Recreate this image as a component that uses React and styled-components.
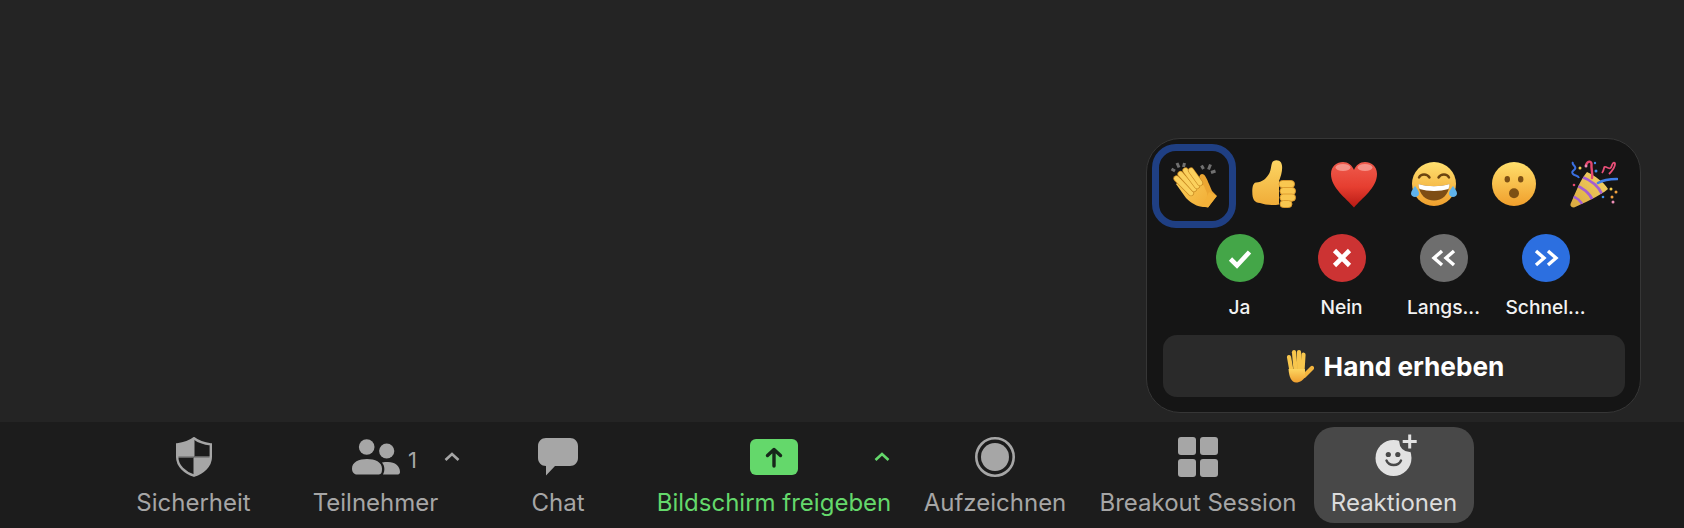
import React from "react";
import styled, { createGlobalStyle } from "styled-components";

const GlobalStyle = createGlobalStyle`
  html, body {
    margin: 0;
    padding: 0;
    background: #242424;
    font-family: Inter, "Noto Sans", "Liberation Sans", sans-serif;
  }
`;

const GREY = "#a6a6a6";
const GREEN = "#64d86b";

function ShieldIcon() {
  return (
    <svg width="36" height="40" viewBox="0 0 36 40">
      <path
        d="M18 1.300C22 4.500 28 6.600 34.800 7.400V20C34.800 29 27 35.600 18 38.700 9 35.600 1.200 29 1.200 20V7.400C8 6.600 14 4.500 18 1.300Z"
        fill="none"
        stroke={GREY}
        strokeWidth="2.400"
      />
      <path d="M18 1.300C14 4.500 8 6.600 1.200 7.400V19H18Z" fill={GREY} stroke={GREY} />
      <path d="M18 21H34.800C34 29 27 35.600 18 38.700Z" fill={GREY} stroke={GREY} />
      <path d="M1 20H35" stroke={GREY} strokeWidth="1" />
    </svg>
  );
}

function PeopleIcon() {
  return (
    <svg width="48" height="36" viewBox="0 0 48 36" fill={GREY}>
      <circle cx="14.700" cy="8" r="7.800" />
      <circle cx="34.700" cy="12" r="7.600" />
      <path d="M0 29.500C0 23 7 20 15 20S30 23 30 29.500 28 35.500 25 35.500H5C2 35.500 0 33 0 29.500Z" />
      <path d="M31 35.500C33 32 33 27 30 23.500 32 23 34 23 36 23 43 23 48 27 48 33 48 34.500 47 35.500 46 35.500Z" />
    </svg>
  );
}

function ChatIcon() {
  return (
    <svg width="40" height="38" viewBox="0 0 40 38" fill={GREY}>
      <path d="M8 0H32C36.500 0 40 3.500 40 8V20C40 24.500 36.500 28 32 28H17L8 37.500V28C3.500 28 0 24.500 0 20V8C0 3.500 3.500 0 8 0Z" />
    </svg>
  );
}

function ShareIcon() {
  return (
    <svg width="48" height="36" viewBox="0 0 48 36">
      <rect width="48" height="36" rx="6" fill={GREEN} />
      <path
        d="M24 27V10.500M17.500 16.500L24 10.500L30.500 16.500"
        fill="none"
        stroke="#17261a"
        strokeWidth="3.400"
        strokeLinecap="round"
        strokeLinejoin="round"
      />
    </svg>
  );
}

function RecordIcon() {
  return (
    <svg width="40" height="40" viewBox="0 0 40 40">
      <circle cx="20" cy="20" r="18.700" fill="none" stroke={GREY} strokeWidth="2.600" />
      <circle cx="20" cy="20" r="14" fill={GREY} />
    </svg>
  );
}

function BreakoutIcon() {
  return (
    <svg width="40" height="40" viewBox="0 0 40 40" fill={GREY}>
      <rect width="18" height="18" rx="3" />
      <rect x="22" width="18" height="18" rx="3" />
      <rect y="22" width="18" height="18" rx="3" />
      <rect x="22" y="22" width="18" height="18" rx="3" />
    </svg>
  );
}

function ReactionIcon() {
  return (
    <svg width="50" height="50" viewBox="-6 0 50 50">
      <circle cx="18.500" cy="26" r="18" fill="#e2e2e2" />
      <circle cx="34.700" cy="9.500" r="10.500" fill="#484848" />
      <path d="M34.700 2.500V16.500M27.700 9.500H41.700" stroke="#e2e2e2" strokeWidth="3" />
      <circle cx="13.300" cy="22.500" r="2.600" fill="#484848" />
      <circle cx="22.800" cy="22.500" r="2.600" fill="#484848" />
      <path d="M11.500 28.500C14 34.500 23.500 34.500 26 28.500" fill="none" stroke="#484848" strokeWidth="2.400" strokeLinecap="round" />
    </svg>
  );
}

function CaretIcon({ color }) {
  return (
    <svg width="16" height="10" viewBox="0 0 16 10">
      <path d="M1.500 8L8 2L14.500 8" fill="none" stroke={color} strokeWidth="2.600" />
    </svg>
  );
}

function ClapEmoji() {
  const finger = [
    [6.500, 18.500, 21, 33],
    [10.500, 14, 24, 29],
    [15.500, 10.500, 27, 26],
    [21, 10.500, 30, 23],
  ];
  return (
    <svg width="48" height="48" viewBox="0 0 48 48">
      <defs>
        <linearGradient id="clapSkin" x1="0" y1="0" x2="1" y2="1">
          <stop offset="0" stopColor="#fbd25f" />
          <stop offset="1" stopColor="#f2ad35" />
        </linearGradient>
      </defs>
      <g stroke="#707070" strokeWidth="3">
        <path d="M1.500 9L5 11M7 3L9 7.500M14.500 3L13.500 7M31.500 5.500L33.500 9M40.500 4.500L38.500 9.500M45.500 11L41 12.500" />
      </g>
      <path d="M32 14C35 14 37 19 39 24L42 31 47 36 38 47.500 30 42 26 28 29 19C29 17 30 14 32 14Z" fill="#eba632" />
      <path d="M6 24L22 11 34 26 37 33C38 38 37 43 35 47 28 47.500 21 43 16 38Z" fill="url(#clapSkin)" />
      <path d="M39 32L46.500 36 38 47.500 32 46.500Z" fill="#f3b139" />
      {finger.map(([x1, y1, x2, y2]) => (
        <g key={x1} strokeLinecap="round">
          <line x1={x1} y1={y1} x2={x2} y2={y2} stroke="#c98a22" strokeWidth="6.200" />
          <line x1={x1} y1={y1} x2={x2} y2={y2} stroke="#fbd15d" strokeWidth="4.800" />
        </g>
      ))}
    </svg>
  );
}

function ThumbEmoji() {
  return (
    <svg width="48" height="48" viewBox="2 0 48 48">
      <defs>
        <linearGradient id="thumbSkin" x1="0" y1="0" x2="0" y2="1">
          <stop offset="0" stopColor="#fcd563" />
          <stop offset="1" stopColor="#f0ac38" />
        </linearGradient>
      </defs>
      <path
        d="M8 22.500C14 22.500 19 18 21.500 13 23 10 23 6 24 3 25 -.5 31 -.8 33 2.500 35.500 7 33.500 15 31 21V44.500C24 46 17 44.500 12 43 6.500 43 4.300 39 4.300 32 4.300 27 5 23 8 22.500Z"
        fill="url(#thumbSkin)"
      />
      {[20.500, 27.500, 34, 40.500].map((y, i) => (
        <rect key={y} x={31 + (i === 0 ? 0 : 1)} y={y} width={i === 3 ? 12 : 15.500} height={i === 3 ? 7 : 7.200} rx="3.500" fill="#f9c750" stroke="#dd9a2c" strokeWidth=".9" />
      ))}
    </svg>
  );
}

function HeartEmoji() {
  return (
    <svg width="48" height="48" viewBox="0 0 48 48">
      <defs>
        <linearGradient id="heartFill" x1="0" y1="0" x2="0" y2="1">
          <stop offset="0" stopColor="#ee5b4d" />
          <stop offset=".55" stopColor="#e63e30" />
          <stop offset="1" stopColor="#b81a14" />
        </linearGradient>
      </defs>
      <path d="M24 47.500C16 38 1 28 1 14 1 6 7 2 13 2 18 2 22 5 24 10 26 5 30 2 35 2 41 2 47 6 47 14 47 28 32 38 24 47.500Z" fill="url(#heartFill)" />
      <ellipse cx="13" cy="7.500" rx="7.500" ry="3.500" fill="#f9a79d" opacity=".75" />
      <ellipse cx="35" cy="7.500" rx="7.500" ry="3.500" fill="#f9a79d" opacity=".75" />
    </svg>
  );
}

function LaughEmoji() {
  return (
    <svg width="48" height="48" viewBox="0 0 48 48">
      <defs>
        <linearGradient id="laughFace" x1="0" y1="0" x2="0" y2="1">
          <stop offset="0" stopColor="#ffe070" />
          <stop offset="1" stopColor="#ef9f2d" />
        </linearGradient>
      </defs>
      <circle cx="24" cy="24" r="22" fill="url(#laughFace)" />
      <path d="M9 17.500C11 13.500 17 13.500 19.500 17.500M28.500 17.500C31 13.500 37 13.500 39 17.500" fill="none" stroke="#6b4410" strokeWidth="2.400" strokeLinecap="round" />
      <path d="M8.500 24C18 27 30 27 39.500 24 39 35 32 40.500 24 40.500S9 35 8.500 24Z" fill="#7d4d14" />
      <path d="M8.500 24C18 27 30 27 39.500 24 39.500 26 39 27.500 38.500 29 30 31.500 18 31.500 9.500 29 9 27.500 8.500 26 8.500 24Z" fill="#fff" />
      <path d="M5 26C7 29 9 31 9 33.500 9 35.500 7 37 5 37S1 35.500 1 33.500C1 31 3 29 5 26Z" fill="#5fb3ec" />
      <path d="M43 26C45 29 47 31 47 33.500 47 35.500 45 37 43 37S39 35.500 39 33.500C39 31 41 29 43 26Z" fill="#5fb3ec" />
    </svg>
  );
}

function WowEmoji() {
  return (
    <svg width="48" height="48" viewBox="0 0 48 48">
      <defs>
        <linearGradient id="wowFace" x1="0" y1="0" x2="0" y2="1">
          <stop offset="0" stopColor="#ffdf6c" />
          <stop offset="1" stopColor="#f09f2c" />
        </linearGradient>
      </defs>
      <circle cx="24" cy="24" r="22" fill="url(#wowFace)" />
      <ellipse cx="17.300" cy="19.300" rx="2.700" ry="3.300" fill="#7d5014" />
      <ellipse cx="30.700" cy="19.300" rx="2.700" ry="3.300" fill="#7d5014" />
      <circle cx="24" cy="33.300" r="5" fill="#7d5014" />
    </svg>
  );
}

function PartyEmoji() {
  return (
    <svg width="48" height="48" viewBox="0 0 48 48" fill="none">
      <defs>
        <linearGradient id="coneFill" x1="0" y1="1" x2="1" y2="0">
          <stop offset="0" stopColor="#d9a93f" />
          <stop offset="1" stopColor="#f6d566" />
        </linearGradient>
        <clipPath id="coneClip">
          <path d="M.500 44C6 32 10 20 17 12 25 16 34 22 38 29 30 36 12 44 4 47.500 1.500 47.500 0 46 .500 44Z" />
        </clipPath>
      </defs>
      <path d="M.500 44C6 32 10 20 17 12 25 16 34 22 38 29 30 36 12 44 4 47.500 1.500 47.500 0 46 .500 44Z" fill="url(#coneFill)" />
      <g clipPath="url(#coneClip)" stroke="#a55fd1" strokeWidth="2.800">
        <path d="M1 36C6 37 11 41 13 46" />
        <path d="M5 25C12 27 20 33 23 41" />
        <path d="M10 16C18 19 28 25 32 34" />
      </g>
      <path d="M3 2C1 5 7 6 5 9 3 11 1 12 3 14 5 16 8 15 9 18" stroke="#3a6fe0" strokeWidth="2" />
      <path d="M16 5C18 0 22 1 21.500 5 21 9 23 13 22 18" stroke="#e4476f" strokeWidth="2.400" strokeLinecap="round" />
      <path d="M32 13C35 9 33 6 36 7 40 9 41 9 42 5 43 2 45 2 45 4 45 7 41 12 39 14" stroke="#e84f78" strokeWidth="1.800" />
      <path d="M28 23C33 20 38 19 47 19" stroke="#3f7ee8" strokeWidth="2.600" strokeLinecap="round" />
      <circle cx="10" cy="8" r="1.500" fill="#f6d04d" />
      <circle cx="16" cy="6" r="1.500" fill="#f08cb4" />
      <circle cx="26" cy="11" r="1.500" fill="#3f8ce8" />
      <circle cx="4" cy="25" r="1.300" fill="#e4476f" />
      <circle cx="25" cy="3" r="1.200" fill="#3f8ce8" />
      <circle cx="41" cy="29" r="1.500" fill="#f6d04d" />
      <circle cx="46" cy="32" r="1.500" fill="#f2a13c" />
      <circle cx="33" cy="37" r="1.300" fill="#3f8ce8" />
      <circle cx="42" cy="37" r="1.500" fill="#f2a13c" />
      <circle cx="43" cy="42" r="1.500" fill="#ef8fb8" />
    </svg>
  );
}

function HandEmoji() {
  return (
    <svg width="30" height="34" viewBox="0 0 30 34">
      <defs>
        <linearGradient id="handSkin" x1="0" y1="0" x2="0" y2="1">
          <stop offset="0" stopColor="#fcd560" />
          <stop offset="1" stopColor="#ef9f2f" />
        </linearGradient>
      </defs>
      <g stroke="#f7c64d" strokeWidth="4.200" strokeLinecap="round">
        <line x1="5" y1="8" x2="7.500" y2="22" />
        <line x1="10" y1="3" x2="11.500" y2="20" />
        <line x1="15" y1="3" x2="15.200" y2="20" />
        <line x1="19.500" y1="5.500" x2="18.500" y2="21" />
      </g>
      <path d="M28 19L20 27" stroke="#f3b53e" strokeWidth="4.200" strokeLinecap="round" />
      <path d="M4.500 20H21V27C20 31 16 33.500 12 33.500 7.500 33.500 5 28 4.500 20Z" fill="url(#handSkin)" />
    </svg>
  );
}

const tools = [
  { label: "Sicherheit", icon: <ShieldIcon />, width: 147 },
  { label: "Teilnehmer", icon: <PeopleIcon />, width: 217, count: "1", caretLeft: 177, caret: GREY },
  { label: "Chat", icon: <ChatIcon />, width: 148 },
  { label: "Bildschirm freigeben", icon: <ShareIcon />, width: 284, green: true, caretLeft: 242, caret: GREEN },
  { label: "Aufzeichnen", icon: <RecordIcon />, width: 158 },
  { label: "Breakout Session", icon: <BreakoutIcon />, width: 232, offset: 8 },
  { label: "Reaktionen", icon: <ReactionIcon />, width: 160, active: true },
];

const emojis = [ClapEmoji, ThumbEmoji, HeartEmoji, LaughEmoji, WowEmoji, PartyEmoji];

const feedback = [
  { label: "Ja", color: "#44a648", path: "M-9.500 1L-3 7.500 9.500-6", width: 4.600 },
  { label: "Nein", color: "#cc3333", path: "M-7.500-7.500L7.500 7.500M7.500-7.500L-7.500 7.500", width: 4.600 },
  { label: "Langs...", color: "#6e6e6e", path: "M-2-7L-10 0-2 7M10-7L2 0 10 7", width: 3.400 },
  { label: "Schnel...", color: "#2c6fe0", path: "M-10-7L-2 0-10 7M2-7L10 0 2 7", width: 3.400 },
];

export default function App() {
  return (
    <Page>
      <GlobalStyle />
      <Stage>
        <ReactionPanel>
          <EmojiRow>
            {emojis.map((Emoji, i) => (
              <EmojiCell key={i} $selected={i === 0}>
                <Emoji />
              </EmojiCell>
            ))}
          </EmojiRow>
          <FeedbackRow>
            {feedback.map((item) => (
              <FeedbackItem key={item.label}>
                <svg width="48" height="48" viewBox="-24 -24 48 48">
                  <circle r="24" fill={item.color} />
                  <path d={item.path} fill="none" stroke="#fff" strokeWidth={item.width} />
                </svg>
                <FeedbackLabel>{item.label}</FeedbackLabel>
              </FeedbackItem>
            ))}
          </FeedbackRow>
          <RaiseHand>
            <HandEmoji />
            Hand erheben
          </RaiseHand>
        </ReactionPanel>
      </Stage>
      <Toolbar>
        {tools.map((tool) => (
          <ToolButton key={tool.label} $width={tool.width} $offset={tool.offset} $active={tool.active}>
            <ToolIcon>{tool.icon}</ToolIcon>
            <ToolLabel $green={tool.green} $active={tool.active}>
              {tool.label}
            </ToolLabel>
            {tool.count && <ToolCount>{tool.count}</ToolCount>}
            {tool.caret && (
              <ToolCaret $left={tool.caretLeft}>
                <CaretIcon color={tool.caret} />
              </ToolCaret>
            )}
          </ToolButton>
        ))}
      </Toolbar>
    </Page>
  );
}

const Page = styled.div`
  display: flex;
  flex-direction: column;
  width: 1684px;
  height: 528px;
  overflow: hidden;
  background: #242424;
`;
const Stage = styled.main`
  position: relative;
  flex: 1;
`;
const ReactionPanel = styled.section`
  position: absolute;
  right: 43px;
  bottom: 9px;
  box-sizing: border-box;
  width: 495px;
  height: 275px;
  padding: 5px 15px 15px 7px;
  background: #151515;
  border: 1px solid #363636;
  border-radius: 34px;
`;
const EmojiRow = styled.div`
  display: grid;
  grid-template-columns: repeat(6, 80px);
`;
const EmojiCell = styled.div`
  box-sizing: border-box;
  display: flex;
  align-items: center;
  justify-content: center;
  width: 84px;
  height: 84px;
  padding-bottom: 4px;
  margin-left: -2px;
  border: 7px solid ${(props) => (props.$selected ? "#1f3f83" : "transparent")};
  border-radius: 24px;
`;
const FeedbackRow = styled.div`
  display: grid;
  grid-template-columns: repeat(4, 102px);
  justify-content: center;
  margin: 6px 0 0 6px;
`;
const FeedbackItem = styled.div`
  display: flex;
  flex-direction: column;
  align-items: center;
  gap: 12px;
`;
const FeedbackLabel = styled.span`
  font-size: 19.200px;
  line-height: 26px;
  font-weight: 500;
  color: #f2f2f2;
  white-space: nowrap;
`;
const RaiseHand = styled.div`
  display: flex;
  align-items: center;
  justify-content: center;
  gap: 10px;
  height: 62px;
  margin: 15px 0 0 9px;
  width: 462px;
  border-radius: 14px;
  background: #2a2a2a;
  color: #fff;
  font-size: 26.200px;
  font-weight: 700;
`;
const Toolbar = styled.footer`
  box-sizing: border-box;
  display: flex;
  height: 106px;
  padding: 5px 0 5px 120px;
  background: #1c1c1c;
`;
const ToolButton = styled.div`
  position: relative;
  display: flex;
  flex-direction: column;
  align-items: center;
  flex: none;
  width: ${(props) => props.$width}px;
  margin-left: ${(props) => props.$offset || 0}px;
  padding-top: 5px;
  border-radius: 20px;
  background: ${(props) => (props.$active ? "#484848" : "transparent")};
`;
const ToolIcon = styled.div`
  display: flex;
  align-items: center;
  justify-content: center;
  height: 50px;
`;
const ToolLabel = styled.span`
  margin-top: 7px;
  font-size: 24px;
  line-height: 28px;
  white-space: nowrap;
  color: ${(props) => (props.$green ? GREEN : props.$active ? "#dcdcdc" : GREY)};
`;
const ToolCount = styled.span`
  position: absolute;
  left: 141px;
  top: 19px;
  font-size: 22px;
  line-height: 28px;
  color: ${GREY};
`;
const ToolCaret = styled.span`
  position: absolute;
  left: ${(props) => props.$left}px;
  top: 25px;
  display: flex;
`;
